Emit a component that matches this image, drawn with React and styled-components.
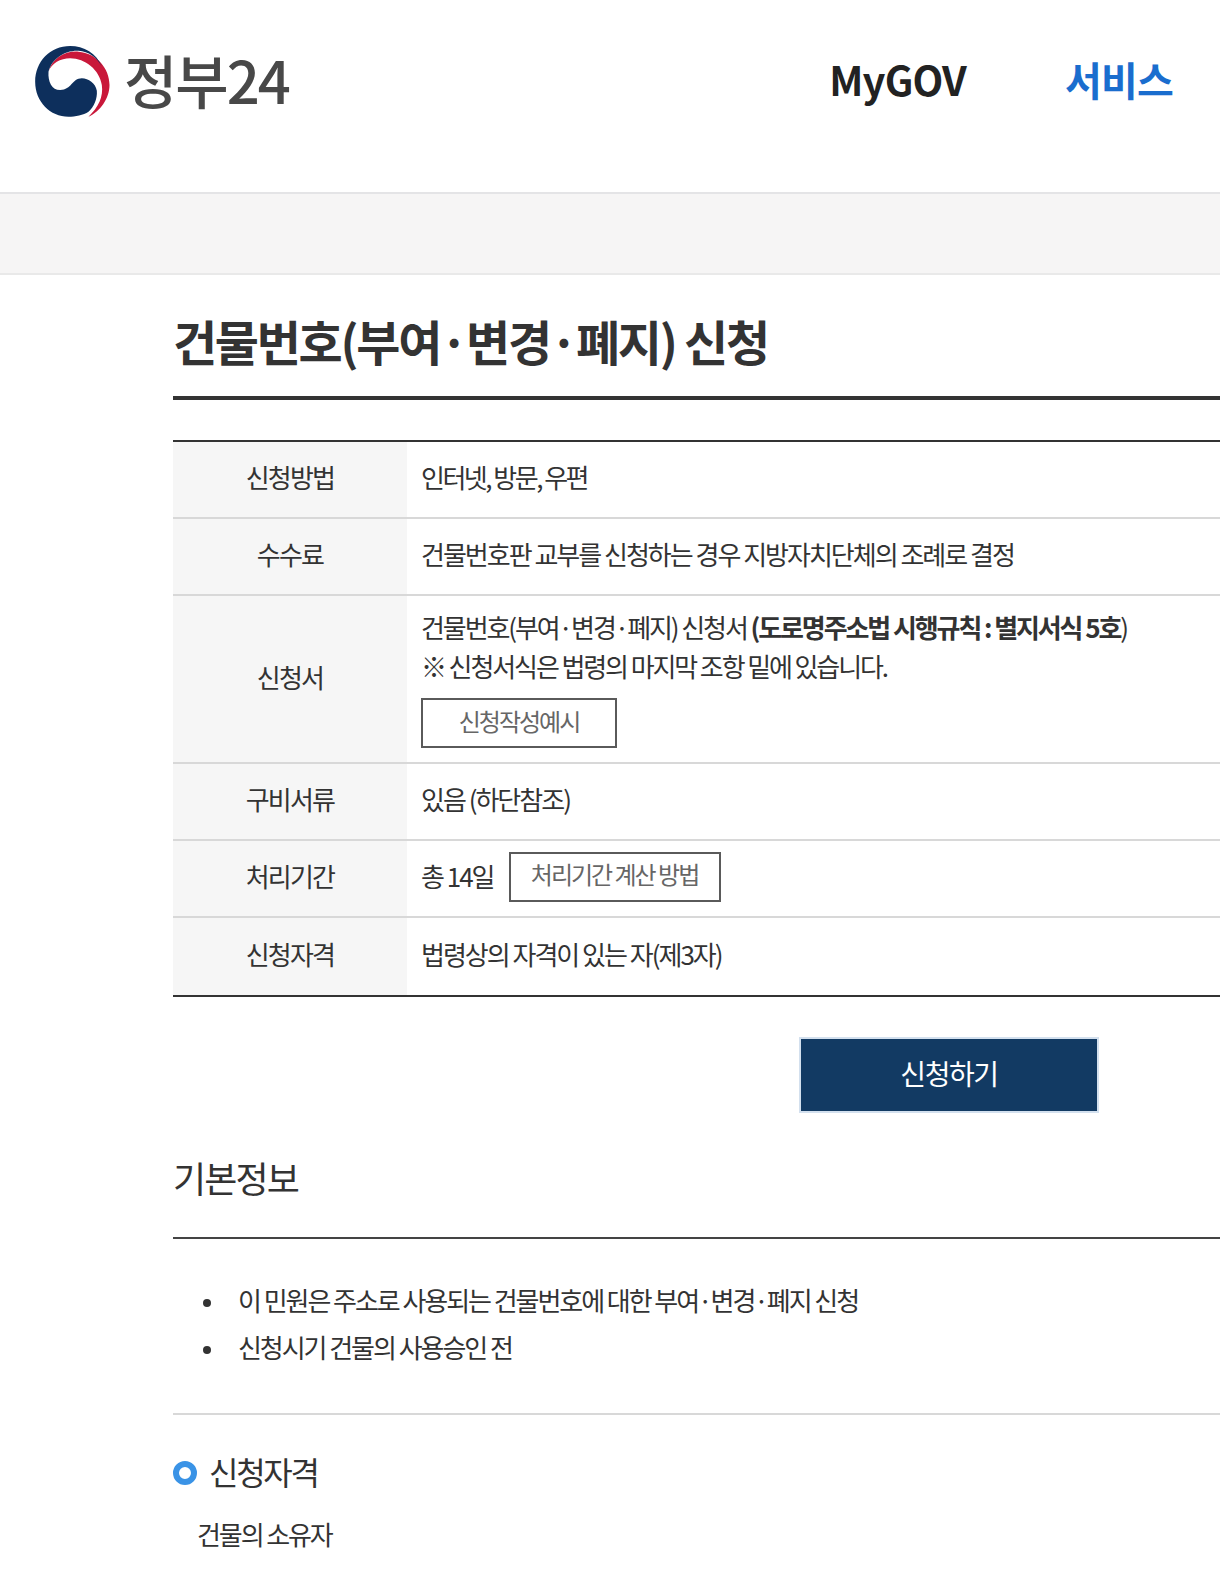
import React from 'react';
import styled, { createGlobalStyle } from 'styled-components';

const GlobalStyle = createGlobalStyle`
  html, body {
    margin: 0;
    padding: 0;
    background: #fff;
  }
  body {
    font-family: "Noto Sans CJK KR", "Noto Sans", sans-serif;
    color: #333;
    overflow: hidden;
    height: 1572px;
  }
`;

const Header = styled.header`
  height: 192px;
  box-sizing: content-box;
  display: flex;
  justify-content: space-between;
  align-items: flex-start;
  padding: 0 47px 0 35px;
  border-bottom: 2px solid #e4e4e6;
`;

const Logo = styled.div`
  display: flex;
  align-items: center;
  gap: 14px;
  height: 72px;
  margin-top: 45px;
`;

const LogoText = styled.span`
  font-size: 58px;
  font-weight: 500;
  letter-spacing: -2px;
  color: #484848;
  line-height: 72px;
  padding-bottom: 4px;
`;

const Nav = styled.nav`
  display: flex;
  align-items: center;
  gap: 99px;
  height: 72px;
  margin-top: 43px;
`;

const NavItem = styled.a`
  font-size: 40px;
  font-weight: 700;
  letter-spacing: -0.8px;
  color: ${(p) => (p.$active ? '#1a6dce' : '#222')};
`;

const Band = styled.div`
  height: 79px;
  background: #f6f5f5;
  border-bottom: 2px solid #e9e9e9;
`;

const Main = styled.main`
  padding-left: 173px;
`;

const Title = styled.h1`
  height: 125px;
  margin: 0;
  box-sizing: border-box;
  padding-top: 30px;
  font-size: 48px;
  line-height: 70px;
  font-weight: 700;
  letter-spacing: -2.3px;
  color: #333;
  border-bottom: 4px solid #333;
`;

const Table = styled.div`
  margin-top: 40px;
  border-top: 2px solid #333;
  border-bottom: 2px solid #333;
`;

const Row = styled.div`
  display: flex;
  min-height: ${(p) => p.$height}px;
  border-top: ${(p) => (p.$first ? 'none' : '2px solid #d8d8d8')};
`;

const HeadCell = styled.div`
  width: 234px;
  flex: none;
  display: flex;
  align-items: center;
  justify-content: center;
  box-sizing: border-box;
  padding-bottom: 6px;
  background: #f6f6f6;
  font-size: 26px;
  letter-spacing: -1.8px;
  color: #333;
`;

const BodyCell = styled.div`
  flex: 1;
  min-width: 0;
  padding: ${(p) => (p.$stack ? '0 0 0 14px' : '0 0 7px 14px')};
  display: flex;
  flex-direction: ${(p) => (p.$stack ? 'column' : 'row')};
  align-items: ${(p) => (p.$stack ? 'flex-start' : 'center')};
  font-size: 26px;
  letter-spacing: ${(p) => (p.$tight ? '-2.5px' : '-2px')};
  color: #333;
  white-space: nowrap;
`;

const FormLine = styled.div`
  line-height: 39px;
  letter-spacing: -2.1px;
  &:first-child {
    margin-top: 11px;
  }
`;

const Strong = styled.strong`
  font-weight: 700;
`;

const OutlineButton = styled.a`
  display: inline-flex;
  align-items: center;
  justify-content: center;
  box-sizing: border-box;
  width: ${(p) => p.$width}px;
  height: 50px;
  margin: ${(p) => p.$margin || '0'};
  padding-bottom: 6px;
  border: 2px solid #5a5a5a;
  background: #fff;
  font-size: 24px;
  letter-spacing: -2px;
  color: #666;
`;

const Actions = styled.div`
  margin-top: 40px;
  padding-left: 626px;
`;

const ApplyButton = styled.a`
  display: flex;
  align-items: center;
  justify-content: center;
  box-sizing: border-box;
  width: 300px;
  height: 76px;
  padding-bottom: 5px;
  background: #123a63;
  border: 2px solid #d3e0ee;
  color: #fff;
  font-size: 28px;
  letter-spacing: -1.4px;
`;

const SectionTitle = styled.h2`
  margin: 26px 0 0;
  height: 100px;
  box-sizing: border-box;
  padding-top: 13px;
  font-size: 36px;
  line-height: 50px;
  font-weight: 400;
  letter-spacing: -1.9px;
  color: #333;
  border-bottom: 2px solid #444;
`;

const BulletList = styled.ul`
  list-style: none;
  margin: 0;
  padding: 37px 0 43px 30px;
  border-bottom: 2px solid #d8d8d8;
`;

const Bullet = styled.li`
  display: flex;
  align-items: center;
  gap: 27px;
  height: 47px;
  font-size: 26px;
  letter-spacing: -2.05px;
  color: #333;
  &::before {
    content: '';
    width: 8px;
    height: 8px;
    margin-top: 6px;
    border-radius: 50%;
    background: #333;
    flex: none;
  }
`;

const SubTitle = styled.h3`
  display: flex;
  align-items: center;
  gap: 12px;
  margin: 31px 0 0;
  font-size: 32px;
  line-height: 50px;
  font-weight: 400;
  letter-spacing: -2.3px;
  color: #333;
`;

const Ring = styled.span`
  width: 24px;
  height: 24px;
  margin-top: 4px;
  box-sizing: border-box;
  border: 6.5px solid #3a93e6;
  border-radius: 50%;
  flex: none;
`;

const SubText = styled.p`
  margin: 18px 0 0 24px;
  font-size: 26px;
  line-height: 40px;
  letter-spacing: -2.1px;
  color: #333;
`;

const Emblem = () => (
  <svg width="75" height="71" viewBox="105 78 224 213" aria-hidden="true">
    <path
      d="M145 155C155 115 195 92 235 95C290 100 328 145 328 195C328 235 300 275 265 290C295 262 310 230 305 195C298 150 255 115 210 115C180 115 155 130 145 155Z"
      fill="#c9183a"
    />
    <path
      d="M210 78C150 78 105 125 105 185C105 245 150 290 205 290C225 290 250 285 265 275C282 260 292 235 290 212C286 190 265 175 245 175C215 175 215 210 180 210C155 210 143 185 145 155C155 115 195 90 235 92C265 95 290 110 305 140C290 100 250 78 210 78Z"
      fill="#0d2f5c"
    />
  </svg>
);

const App = () => {
  return (
    <>
      <GlobalStyle />
      <Header>
        <Logo>
          <Emblem />
          <LogoText>정부24</LogoText>
        </Logo>
        <Nav>
          <NavItem>MyGOV</NavItem>
          <NavItem $active>서비스</NavItem>
        </Nav>
      </Header>
      <Band />
      <Main>
        <Title>건물번호(부여·변경·폐지) 신청</Title>
        <Table>
          <Row $first $height={75}>
            <HeadCell>신청방법</HeadCell>
            <BodyCell $tight>인터넷, 방문, 우편</BodyCell>
          </Row>
          <Row $height={75}>
            <HeadCell>수수료</HeadCell>
            <BodyCell>건물번호판 교부를 신청하는 경우 지방자치단체의 조례로 결정</BodyCell>
          </Row>
          <Row $height={166}>
            <HeadCell>신청서</HeadCell>
            <BodyCell $stack>
              <FormLine>
                건물번호(부여·변경·폐지) 신청서 <Strong>(도로명주소법 시행규칙 : 별지서식 5호</Strong>)
              </FormLine>
              <FormLine>※ 신청서식은 법령의 마지막 조항 밑에 있습니다.</FormLine>
              <OutlineButton $width={196} $margin="13px 0 0">신청작성예시</OutlineButton>
            </BodyCell>
          </Row>
          <Row $height={75}>
            <HeadCell>구비서류</HeadCell>
            <BodyCell>있음 (하단참조)</BodyCell>
          </Row>
          <Row $height={75}>
            <HeadCell>처리기간</HeadCell>
            <BodyCell>
              총 14일
              <OutlineButton $width={212} $margin="3px 0 0 15px">처리기간 계산 방법</OutlineButton>
            </BodyCell>
          </Row>
          <Row $height={77}>
            <HeadCell>신청자격</HeadCell>
            <BodyCell>법령상의 자격이 있는 자(제3자)</BodyCell>
          </Row>
        </Table>
        <Actions>
          <ApplyButton>신청하기</ApplyButton>
        </Actions>
        <SectionTitle>기본정보</SectionTitle>
        <BulletList>
          <Bullet>이 민원은 주소로 사용되는 건물번호에 대한 부여·변경·폐지 신청</Bullet>
          <Bullet>신청시기 건물의 사용승인 전</Bullet>
        </BulletList>
        <SubTitle>
          <Ring />
          신청자격
        </SubTitle>
        <SubText>건물의 소유자</SubText>
      </Main>
    </>
  );
};

export default App;
